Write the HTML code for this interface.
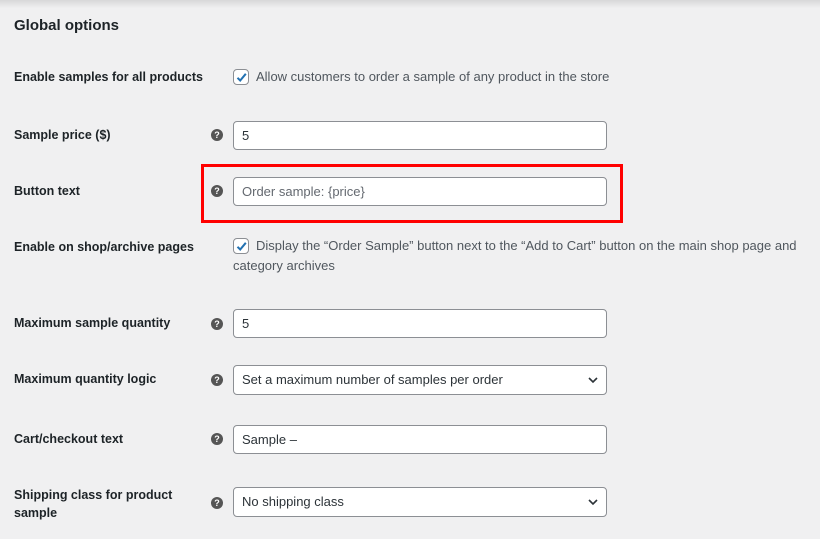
<!DOCTYPE html>
<html><head><meta charset="utf-8"><style>
*{box-sizing:border-box;margin:0;padding:0}
body{width:820px;height:539px;background:#f0f0f1;font-family:"Liberation Sans",sans-serif;color:#1d2327;position:relative;overflow:hidden}
.top{position:absolute;left:0;top:0;width:820px;height:8px;background:linear-gradient(#d8d8d9,#f0f0f1)}
.h{position:absolute;left:14px;top:17px;font-size:15px;font-weight:600}
.l{position:absolute;left:14px;font-size:12.5px;font-weight:bold;color:#1d2327;line-height:18px;width:175px}
.q{position:absolute;left:211px;width:12px;height:12px;border-radius:50%;background:#555;color:#fff;font-size:9px;font-weight:bold;text-align:center;line-height:12px}
.i{position:absolute;left:233px;width:374px;height:29px;background:#fff;border:1px solid #8c8f94;border-radius:4px;font-size:13px;color:#2c3338;padding-left:8px;line-height:27px}
.c{position:absolute;left:233px;width:16px;height:16px;background:#fff;border:1px solid #8c8f94;border-radius:4px}
.c svg{position:absolute;left:1px;top:1px}
.t{position:absolute;left:256px;font-size:13px;color:#50575e;line-height:20px;white-space:nowrap}
.chev{position:absolute;right:8px;top:10px}
</style></head><body>
<div class="top"></div>
<div class="h">Global options</div>

<div class="l" style="top:68px;width:200px">Enable samples for all products</div>
<div class="c" style="top:69px"><svg width="13" height="13" viewBox="0 0 13 13"><path d="M2.5 6.8 5.2 9.5 10.8 2.8" fill="none" stroke="#2271b1" stroke-width="2"/></svg></div>
<div class="t" style="top:67px">Allow customers to order a sample of any product in the store</div>

<div class="l" style="top:126px">Sample price ($)</div>
<div class="q" style="top:129px">?</div>
<div class="i" style="top:121px">5</div>

<div class="l" style="top:182px">Button text</div>
<div class="q" style="top:185px">?</div>
<div class="i" style="top:177px;color:#646970">Order sample: {price}</div>
<div style="position:absolute;left:201px;top:164px;width:422px;height:59px;border:3px solid #f00"></div>

<div class="l" style="top:238px;width:200px">Enable on shop/archive pages</div>
<div class="c" style="top:238px"><svg width="13" height="13" viewBox="0 0 13 13"><path d="M2.5 6.8 5.2 9.5 10.8 2.8" fill="none" stroke="#2271b1" stroke-width="2"/></svg></div>
<div class="t" style="top:236px">Display the “Order Sample” button next to the “Add to Cart” button on the main shop page and</div>
<div class="t" style="top:256px;left:233px">category archives</div>

<div class="l" style="top:314px">Maximum sample quantity</div>
<div class="q" style="top:318px">?</div>
<div class="i" style="top:309px">5</div>

<div class="l" style="top:370px">Maximum quantity logic</div>
<div class="q" style="top:374px">?</div>
<div class="i" style="top:365px;height:30px">Set a maximum number of samples per order<svg class="chev" width="10" height="8" viewBox="0 0 10 8"><path d="M1 2 5 6 9 2" fill="none" stroke="#2c3338" stroke-width="1.6"/></svg></div>

<div class="l" style="top:430px">Cart/checkout text</div>
<div class="q" style="top:433px">?</div>
<div class="i" style="top:425px">Sample –</div>

<div class="l" style="top:486px;width:175px">Shipping class for product sample</div>
<div class="q" style="top:497px">?</div>
<div class="i" style="top:487px;height:30px">No shipping class<svg class="chev" width="10" height="8" viewBox="0 0 10 8"><path d="M1 2 5 6 9 2" fill="none" stroke="#2c3338" stroke-width="1.6"/></svg></div>
</body></html>
